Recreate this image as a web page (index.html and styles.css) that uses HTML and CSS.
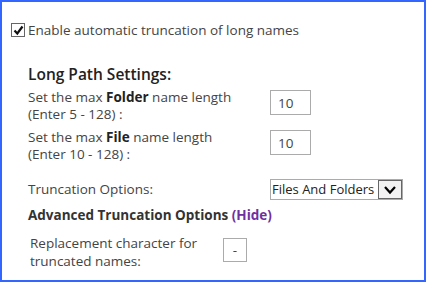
FILE: index.html
```html
<!DOCTYPE html>
<html lang="en">
<head>
  <meta charset="UTF-8">
  <title>Long Path Settings</title>
  <link rel="stylesheet" href="styles.css">
</head>
<body>

  <div class="settings-panel">
    <label class="enable-row">
      <span class="check-box">
        <svg width="11" height="11" viewBox="0 0 11 11"><path d="M1.5 5.5 L4.3 8.5 L9.5 1.5" fill="none" stroke="#111" stroke-width="2.2"/></svg>
      </span>
      <span>Enable automatic truncation of long names</span>
    </label>

    <div class="long-path">
      <h2>Long Path Settings:</h2>

      <div class="field-row">
        <div class="field-label">Set the max <b>Folder</b> name length<br>(Enter 5 - 128) :</div>
        <input type="text" class="num-input" value="10">
      </div>

      <div class="field-row">
        <div class="field-label">Set the max <b>File</b> name length<br>(Enter 10 - 128) :</div>
        <input type="text" class="num-input" value="10">
      </div>

      <div class="field-row select-row">
        <div class="field-label">Truncation Options:</div>
        <div class="fake-select">
          <span>Files And Folders</span>
          <span class="select-arrow">
            <svg width="14" height="10" viewBox="0 0 14 10"><path d="M2 2 L7 7.5 L12 2" fill="none" stroke="#000" stroke-width="2.2"/></svg>
          </span>
        </div>
      </div>

      <div class="advanced-title">Advanced Truncation Options <a href="#" class="hide-link">(Hide)</a></div>

      <div class="field-row replace-row">
        <div class="field-label">Replacement character for<br>truncated names:</div>
        <input type="text" class="char-input" value="-">
      </div>
    </div>
  </div>

</body>
</html>
```

FILE: styles.css
```css
body {
  margin: 0;
  font-family: "Open Sans", sans-serif;
  background: white;
  color: #444;
}
.settings-panel {
  width: 422px;
  height: 278px;
  border: 2px solid #3366ff;
  background: white;
}
.enable-row {
  display: flex;
  align-items: center;
  margin: 19px 0 0 9px;
  font-size: 13.5px;
}
.check-box {
  box-sizing: border-box;
  width: 14px;
  height: 14px;
  margin-right: 3px;
  border: 1px solid #666;
  display: flex;
  align-items: center;
  justify-content: center;
}
.long-path {
  padding-left: 26px;
  font-size: 13.5px;
}
h2 {
  margin: 24px 0 4px 0;
  font-size: 15.5px;
  font-weight: 600;
  color: #222;
}
.field-row {
  display: flex;
  align-items: flex-start;
  margin-bottom: 6px;
}
.field-label {
  width: 242px;
  line-height: 17px;
}
.field-label b {
  color: #222;
}
.num-input {
  box-sizing: border-box;
  width: 41px;
  height: 25px;
  margin-top: 1px;
  border: 1px solid #ababab;
  padding: 0 0 0 7px;
  font-family: inherit;
  font-size: 13.5px;
  color: #444;
}
.select-row {
  margin-top: 16px;
  align-items: center;
}
.fake-select {
  box-sizing: border-box;
  display: flex;
  align-items: stretch;
  width: 133px;
  height: 21px;
  border: 1px solid #ababab;
  font-size: 13px;
  color: #222;
  white-space: nowrap;
  overflow: hidden;
}
.fake-select span:first-child {
  flex: 1;
  padding-left: 1px;
  line-height: 19px;
  overflow: hidden;
}
.select-arrow {
  width: 22px;
  border: 1px solid #666;
  background: #f2f2f2;
  display: flex;
  align-items: center;
  justify-content: center;
}
.advanced-title {
  margin: 4px 0 0 0;
  font-weight: bold;
  color: #333;
}
.hide-link {
  color: #7030a0;
  text-decoration: none;
}
.replace-row {
  margin: 10px 0 0 2px;
}
.replace-row .field-label {
  width: 193px;
  line-height: 18px;
}
.char-input {
  box-sizing: border-box;
  width: 24px;
  height: 24px;
  margin-top: 4px;
  border: 1px solid #ababab;
  padding: 0;
  text-align: center;
  font-family: inherit;
  font-size: 13.5px;
  color: #444;
}
```
